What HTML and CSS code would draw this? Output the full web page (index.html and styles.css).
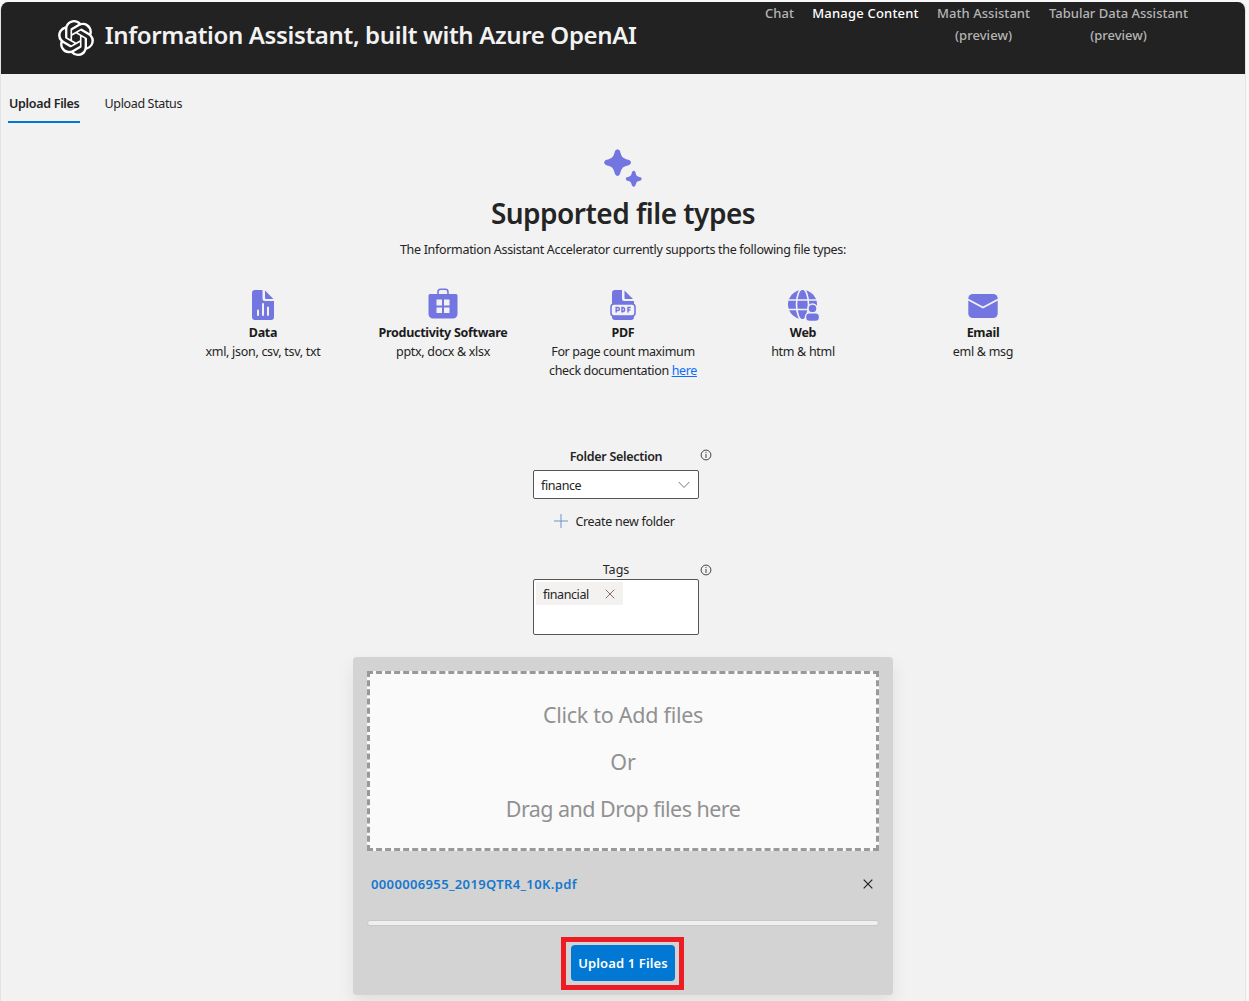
FILE: index.html
```html
<!DOCTYPE html>
<html lang="en">
<head>
<meta charset="utf-8">
<title>Information Assistant</title>
<link rel="stylesheet" href="styles.css">
</head>
<body>
<div class="app">
  <header class="header">
    <div class="brand">
      <svg class="logo" viewBox="0 0 24 24" fill="#fff"><path d="M22.2819 9.8211a5.9847 5.9847 0 0 0-.5157-4.9108 6.0462 6.0462 0 0 0-6.5098-2.9A6.0651 6.0651 0 0 0 4.9807 4.1818a5.9847 5.9847 0 0 0-3.9977 2.9 6.0462 6.0462 0 0 0 .7427 7.0966 5.98 5.98 0 0 0 .511 4.9107 6.051 6.051 0 0 0 6.5146 2.9001A5.9847 5.9847 0 0 0 13.2599 24a6.0557 6.0557 0 0 0 5.7718-4.2058 5.9894 5.9894 0 0 0 3.9977-2.9001 6.0557 6.0557 0 0 0-.7475-7.0729zm-9.022 12.6081a4.4755 4.4755 0 0 1-2.8764-1.0408l.1419-.0804 4.7783-2.7582a.7948.7948 0 0 0 .3927-.6813v-6.7369l2.02 1.1686a.071.071 0 0 1 .038.052v5.5826a4.504 4.504 0 0 1-4.4945 4.4944zm-9.6607-4.1254a4.4708 4.4708 0 0 1-.5346-3.0137l.142.0852 4.783 2.7582a.7712.7712 0 0 0 .7806 0l5.8428-3.3685v2.3324a.0804.0804 0 0 1-.0332.0615L9.74 19.9502a4.4992 4.4992 0 0 1-6.1408-1.6464zM2.3408 7.8956a4.485 4.485 0 0 1 2.3655-1.9728V11.6a.7664.7664 0 0 0 .3879.6765l5.8144 3.3543-2.0201 1.1685a.0757.0757 0 0 1-.071 0l-4.8303-2.7865A4.504 4.504 0 0 1 2.3408 7.872zm16.5963 3.8558L13.1038 8.364 15.1192 7.2a.0757.0757 0 0 1 .071 0l4.8303 2.7913a4.4944 4.4944 0 0 1-.6765 8.1042v-5.6772a.79.79 0 0 0-.407-.667zm2.0107-3.0231l-.142-.0852-4.7735-2.7818a.7759.7759 0 0 0-.7854 0L9.409 9.2297V6.8974a.0662.0662 0 0 1 .0284-.0615l4.8303-2.7866a4.4992 4.4992 0 0 1 6.6802 4.66zM8.3065 12.863l-2.02-1.1638a.0804.0804 0 0 1-.038-.0567V6.0742a4.4992 4.4992 0 0 1 7.3757-3.4537l-.142.0805L8.704 5.459a.7948.7948 0 0 0-.3927.6813zm1.0976-2.3654l2.602-1.4998 2.6069 1.4998v2.9994l-2.5974 1.4997-2.6067-1.4997Z"/></svg>
      <span class="title">Information Assistant, built with Azure OpenAI</span>
    </div>
    <nav class="nav">
      <a class="nav-chat">Chat</a>
      <a class="nav-manage active">Manage Content</a>
      <a class="nav-math">Math Assistant<br>(preview)</a>
      <a class="nav-tabular">Tabular Data Assistant<br>(preview)</a>
    </nav>
  </header>

  <div class="tabs">
    <div class="tab selected">Upload Files</div>
    <div class="tab">Upload Status</div>
  </div>

  <main class="main">
    <svg class="sparkle" viewBox="0 0 38 38" fill="#7376e1"><path d="M11.1 1.800Q13.500-1.300 15.900 1.800C17.800 8.600 18.400 9.200 25.300 11.100Q28.700 13.500 25.300 15.900C18.400 17.800 17.800 18.400 15.900 25.300Q13.500 28.700 11.100 25.300C9.200 18.400 8.600 17.800 1.800 15.900Q-1.600 13.500 1.800 11.100C8.600 9.200 9.200 8.600 11.100 1.800Z"/><path d="M28.100 22.900Q29.700 20.800 31.300 22.900C32.500 27 32.500 27 36.600 28.200Q38.800 29.800 36.600 31.400C32.500 32.600 32.500 32.600 31.300 36.700Q29.700 38.900 28.100 36.700C26.900 32.600 26.900 32.600 22.800 31.400Q20.600 29.800 22.800 28.200C26.900 27 26.900 27 28.100 22.900Z"/></svg>
    <h1 class="heading">Supported file types</h1>
    <p class="intro">The Information Assistant Accelerator currently supports the following file types:</p>

    <div class="types">
      <div class="type">
        <svg class="type-icon" viewBox="0 0 32 32" fill="#7376e1"><path fill-rule="evenodd" d="M8 1h7.500v8.500a2.500 2.500 0 0 0 2.500 2.500H27v16a3 3 0 0 1-3 3H8a3 3 0 0 1-3-3V4a3 3 0 0 1 3-3zM12 21.500a1 1 0 0 0-2 0V26a1 1 0 0 0 2 0zM17 15a1 1 0 0 0-2 0v11a1 1 0 0 0 2 0zM22 18.500a1 1 0 0 0-2 0V26a1 1 0 0 0 2 0z"/><path d="M18 1.500V9a1 1 0 0 0 1 1h7.500z"/></svg>
        <b class="type-data">Data</b><span class="desc-data">xml, json, csv, tsv, txt</span>
      </div>
      <div class="type">
        <svg class="type-icon" viewBox="0 0 32 32" fill="#7376e1"><path d="M11 6V3Q11 .2 13.500 .2h5Q21 .2 21 3V6" fill="none" stroke="#7376e1" stroke-width="1.600"/><path fill-rule="evenodd" d="M3 5h26a1.500 1.500 0 0 1 1.500 1.500V25a4.500 4.500 0 0 1-4.500 4.500H6A4.500 4.500 0 0 1 1.500 25V6.500A1.500 1.500 0 0 1 3 5zM9.500 10.500v6H15v-6zM17 10.500v6h5.500v-6zM9.500 18.500V24H15v-5.500zM17 18.500V24h5.500v-5.500z"/></svg>
        <b class="type-productivity">Productivity Software</b><span class="desc-productivity">pptx, docx &amp; xlsx</span>
      </div>
      <div class="type">
        <svg class="type-icon" viewBox="0 0 32 32" fill="#7376e1"><path d="M8 1h7v9a2 2 0 0 0 2 2h10v4H5V4a3 3 0 0 1 3-3z"/><path d="M17.500 1.500V9a1 1 0 0 0 1 1H26zM5 27v1a3 3 0 0 0 3 3h16a3 3 0 0 0 3-3v-1z"/><rect x="4" y="15" width="24" height="12" rx="3" fill="#f2f2f2" stroke="#7376e1" stroke-width="1.600"/><path d="M9.200 23.500v-5h1.700a1.400 1.400 0 0 1 0 3H9.200M15 18.500v4.200h.500a2.100 2.100 0 0 0 0-4.200zM21 23.500v-5h2.800M21 21h2.400" fill="none" stroke="#7376e1" stroke-width="1.500"/></svg>
        <b class="type-pdf">PDF</b><span class="desc-pdf">For page count maximum<br>check documentation <a class="link">here</a></span>
      </div>
      <div class="type">
        <svg class="type-icon" viewBox="0 0 32 32"><circle cx="15.500" cy="15.500" r="14.500" fill="#7376e1"/><g fill="none" stroke="#f2f2f2" stroke-width="1.600"><ellipse cx="15.500" cy="15.500" rx="6" ry="15.500"/><path d="M0 11h31M0 20.500h31"/></g><g fill="#7376e1" stroke="#f2f2f2" stroke-width="1.400"><circle cx="25.500" cy="19.500" r="4.500"/><rect x="18.500" y="23.700" width="14" height="8.800" rx="4"/></g></svg>
        <b class="type-web">Web</b><span class="desc-web">htm &amp; html</span>
      </div>
      <div class="type">
        <svg class="type-icon" viewBox="0 0 32 32"><rect x="1.300" y="5" width="29.400" height="24" rx="4.500" fill="#7376e1"/><path d="M1 10.500l15 8 15-8" fill="none" stroke="#f2f2f2" stroke-width="1.700"/></svg>
        <b class="type-email">Email</b><span class="desc-email">eml &amp; msg</span>
      </div>
    </div>

    <section class="fields">
      <div class="label-row">
        <span class="folder-label">Folder Selection</span>
        <svg class="info" viewBox="0 0 12 12"><circle cx="6" cy="6" r="4.900" fill="none" stroke="#444" stroke-width="1"/><path d="M6 5v4M6 3v1.100" stroke="#444"/></svg>
      </div>
      <div class="select"><span>finance</span><svg viewBox="0 0 12 8" class="chevron"><path d="M.7 1L6 6.500 11.300 1" fill="none" stroke="#777"/></svg></div>
      <div class="create"><svg class="plus" viewBox="0 0 14 14"><path d="M7 0v14M0 7h14" stroke="#6f92ca"/></svg><span>Create new folder</span></div>
      <div class="label-row tags-row">
        <span class="tags-label">Tags</span>
        <svg class="info" viewBox="0 0 12 12"><circle cx="6" cy="6" r="4.900" fill="none" stroke="#444" stroke-width="1"/><path d="M6 5v4M6 3v1.100" stroke="#444"/></svg>
      </div>
      <div class="tag-box"><div class="chip"><span>financial</span><svg class="chip-x" viewBox="0 0 10 10"><path d="M.7.7l8.600 8.600M9.300.7L.7 9.300" stroke="#86706c"/></svg></div></div>
    </section>

    <section class="panel">
      <div class="dropzone">
        <p class="drop-click">Click to Add files</p>
        <p class="drop-or">Or</p>
        <p class="drop-drag">Drag and Drop files here</p>
      </div>
      <div class="file">
        <span class="file-name">0000006955_2019QTR4_10K.pdf</span>
        <svg class="remove" viewBox="0 0 10 10"><path d="M.7.7l8.600 8.600M9.300.7L.7 9.300" stroke="#222" stroke-width="1.200"/></svg>
      </div>
      <div class="progress"></div>
      <div class="highlight"><button class="upload">Upload 1 Files</button></div>
    </section>
  </main>
</div>
</body>
</html>
```
FILE: styles.css
```css
* { box-sizing: border-box; }
body {
  margin: 0;
  padding: 2px 3px 0 0;
  height: 1001px;
  overflow: hidden;
  background: #f8f8f8;
  color: #242424;
  font-family: "Noto Sans", "Open Sans", sans-serif;
  font-size: 12.5px;
  line-height: 19px;
}
h1, p { margin: 0; }
.app {
  height: 999px;
  background: #f2f2f2;
  border: solid #e3e3e3;
  border-width: 0 1px;
  border-radius: 8px 8px 0 0;
  overflow: hidden;
}
.header {
  height: 72px;
  background: #222;
  display: flex;
  justify-content: space-between;
}
.brand { display: flex; align-items: flex-start; padding: 18px 0 0 57px; color: #f2f2f2; }
.logo { width: 36px; height: 36px; margin-right: 10.7px; }
.title { font-size: 24px; font-weight: 600; line-height: 30px; letter-spacing: -0.35px; white-space: nowrap; }
.nav {
  display: flex;
  gap: 18px;
  padding-right: 56px;
  color: #b5b5b5;
  font-size: 13px;
  font-weight: 500;
  line-height: 22px;
  text-align: center;
  white-space: nowrap;
}
.nav .active { color: #fff; }
.nav-chat { width: 29px; }
.nav-manage { width: 107px; letter-spacing: .2px; }
.nav-math { width: 93px; letter-spacing: .05px; }
.nav-tabular { width: 141px; }
.tabs { display: flex; gap: 17px; padding: 10px 0 0 7px; height: 49px; }
.tab { height: 39px; line-height: 39px; padding: 0 0 0 7.5px; white-space: nowrap; letter-spacing: -.35px; }
.tab.selected { width: 72px; padding: 0 0 0 1px; font-weight: 600; letter-spacing: -.3px; border-bottom: 2px solid #0078d4; }
.main { display: flex; flex-direction: column; align-items: center; }
.sparkle { width: 38px; height: 38px; margin-top: 26px; }
.heading { font-size: 28px; font-weight: 600; line-height: 38px; margin-top: 7px; letter-spacing: -.52px; white-space: nowrap; }
.intro { margin-top: 8px; white-space: nowrap; letter-spacing: -.32px; }
.types { display: grid; grid-template-columns: repeat(5, 180px); height: 134px; margin-top: 30px; }
.type { display: flex; flex-direction: column; align-items: center; text-align: center; white-space: nowrap; letter-spacing: -.3px; }
.type-icon { width: 32px; height: 32px; margin-bottom: 2px; overflow: visible; }
.type b { color: #1b1b1b; }
.desc-pdf { letter-spacing: -.37px; }
.link { color: #0d6efd; text-decoration: underline; }
.fields { width: 166px; margin: 20px 0 0 -14px; letter-spacing: -.3px; }
.label-row { display: flex; height: 27px; width: 179px; align-items: flex-start; justify-content: space-between; padding-top: 4px; }
.label-row span { width: 166px; text-align: center; white-space: nowrap; }
.folder-label { font-weight: 600; letter-spacing: -.3px; }
.info { width: 12px; height: 12px; flex: none; margin-top: 2px; }
.select { height: 29px; border: 1px solid #555; border-radius: 2px; background: #fff; display: flex; align-items: center; justify-content: space-between; padding: 0 8px 0 7px; }
.select span { letter-spacing: -.4px; padding-top: 2px; }
.chevron { width: 12px; height: 8px; }
.create { display: flex; align-items: center; gap: 7.4px; height: 20px; margin: 12px 0 0 21px; white-space: nowrap; }
.plus { width: 14px; height: 14px; }
.tags-row { margin-top: 28px; height: 20px; padding-top: 1px; }
.tags-label { letter-spacing: 0; }
.tags-row .info { margin-top: 4px; }
.tag-box { height: 56px; border: 1px solid #555; border-radius: 2px; background: #fff; padding: 2px; }
.chip { width: 87px; height: 23px; background: #f3f2f1; display: flex; align-items: center; justify-content: space-between; padding: 0 8px 0 7px; letter-spacing: -.4px; }
.chip span { padding-top: 2px; }
.chip-x { width: 10px; height: 10px; }
.panel { width: 540px; height: 338px; margin-top: 22px; padding: 14px; background: #d3d3d3; border-radius: 4px; box-shadow: 0 8px 18px rgba(0,0,0,.08); display: flex; flex-direction: column; align-items: center; flex: none; }
.dropzone { width: 512px; height: 180px; flex: none; border: 3px dashed #999; background: #fafafa; padding-top: 17px; color: #919191; font-size: 21.5px; line-height: 47px; text-align: center; }
.drop-click { letter-spacing: -.28px; }
.drop-drag { letter-spacing: -.55px; }
.file { width: 512px; height: 66px; flex: none; display: flex; align-items: center; justify-content: space-between; padding: 0 6px 0 4px; color: #1677cf; font-size: 13px; font-weight: 600; letter-spacing: .36px; }
.remove { width: 10px; height: 10px; }
.progress { width: 512px; height: 6px; margin-top: 3px; border: 1px solid #c8c8c8; border-radius: 3px; background: #efefef; flex: none; }
.highlight { width: 123px; height: 53px; margin: 11px 1px 0 0; border: 5px solid #ed1c24; padding: 3px 4px 4px 5px; flex: none; }
.upload { display: block; width: 104px; height: 36px; border: 0; border-radius: 4px; background: #0078d4; color: #fff; font: 600 13px/36px "Noto Sans", "Open Sans", sans-serif; letter-spacing: .12px; padding: 0; white-space: nowrap; }
```
